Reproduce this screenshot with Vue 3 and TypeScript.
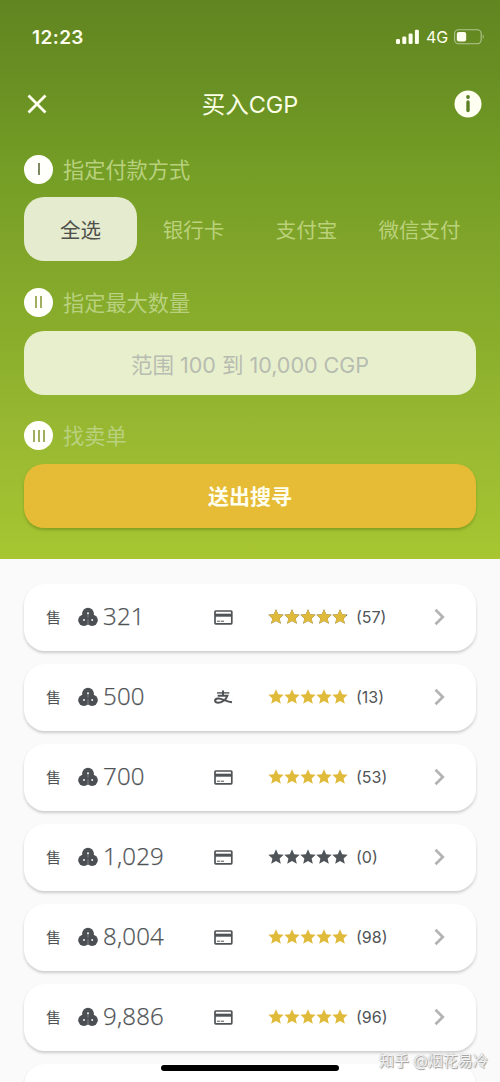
<script setup lang="ts">
interface Order {
  amount: string
  method: 'card' | 'alipay'
  rating: number
  reviews: number
}

const methods: string[] = ['全选', '银行卡', '支付宝', '微信支付']

const orders: Order[] = [
  { amount: '321', method: 'card', rating: 4.86, reviews: 57 },
  { amount: '500', method: 'alipay', rating: 5, reviews: 13 },
  { amount: '700', method: 'card', rating: 5, reviews: 53 },
  { amount: '1,029', method: 'card', rating: 0, reviews: 0 },
  { amount: '8,004', method: 'card', rating: 5, reviews: 98 },
  { amount: '9,886', method: 'card', rating: 5, reviews: 96 },
]

const star = 'M8 0.2 L10.2 5.2 L15.7 5.7 L11.6 9.4 L12.8 14.8 L8 12 L3.2 14.8 L4.4 9.4 L0.3 5.7 L5.8 5.2 Z'
</script>

<template>
  <div class="screen">
    <header class="hero">
      <div class="status">
        <span class="clock">12:23</span>
        <div class="status-right">
          <svg class="signal" width="24" height="16" viewBox="0 0 24 16">
            <rect x="0" y="10" width="4" height="5" rx="1.2" />
            <rect x="6.3" y="7.5" width="4" height="7.5" rx="1.2" />
            <rect x="12.6" y="4.5" width="4" height="10.5" rx="1.2" />
            <rect x="18.9" y="0.8" width="4" height="14.2" rx="1.2" />
          </svg>
          <span class="network">4G</span>
          <svg class="battery" width="31" height="16" viewBox="0 0 31 16">
            <rect x="0.6" y="0.8" width="26.6" height="14" rx="4" fill="none" stroke="#fff" stroke-opacity="0.5" stroke-width="1.1" />
            <rect x="2.8" y="3" width="9.4" height="9.6" rx="2" fill="#fffff0" />
            <path d="M28.8 5.6 Q30.8 7.8 28.8 10 Z" fill="#fff" fill-opacity="0.5" />
          </svg>
        </div>
      </div>

      <nav class="nav">
        <svg width="20" height="20" viewBox="0 0 20 20">
          <path d="M1.5 1.5 L18.5 18.5 M18.5 1.5 L1.5 18.5" stroke="#fffff0" stroke-width="2.8" />
        </svg>
        <h1>买入CGP</h1>
        <svg width="28" height="28" viewBox="0 0 28 28">
          <circle cx="14" cy="14" r="13.5" fill="#fffff2" />
          <circle cx="14" cy="7" r="1.9" fill="#5c8024" />
          <path d="M14 12 V20.5" stroke="#5c8024" stroke-width="3.4" stroke-linecap="round" />
        </svg>
      </nav>

      <div class="step">
        <span class="badge"><i class="first"></i></span>
        <span class="step-label">指定付款方式</span>
      </div>
      <div class="tabs">
        <span v-for="(m, i) in methods" :key="m" class="tab" :class="{ active: i === 0 }">{{ m }}</span>
      </div>

      <div class="step">
        <span class="badge"><i v-for="n in 2" :key="n"></i></span>
        <span class="step-label">指定最大数量</span>
      </div>
      <div class="field">范围 100 到 10,000 CGP</div>

      <div class="step">
        <span class="badge"><i v-for="n in 3" :key="n"></i></span>
        <span class="step-label">找卖单</span>
      </div>
      <div class="submit">送出搜寻</div>
    </header>

    <main class="list">
      <article v-for="o in orders" :key="o.amount" class="card">
        <span class="side">售</span>
        <svg class="coin" width="21" height="20" viewBox="0 0 21 20">
          <g fill="#4b4e52">
            <circle cx="10" cy="6.6" r="5.9" />
            <circle cx="5.9" cy="13.2" r="5.7" />
            <circle cx="14.1" cy="13.2" r="5.7" />
            <rect x="6" y="8" width="8" height="9" />
          </g>
          <path d="M10 6.5 V10.5 M10 12.5 V18" stroke="#9a9ea2" stroke-width="0.7" fill="none" />
          <g fill="#f2f2f2">
            <circle cx="10" cy="6.2" r="1" />
            <circle cx="6" cy="13" r="1" />
            <circle cx="14.2" cy="13" r="1" />
          </g>
        </svg>
        <span class="amount">{{ o.amount }}</span>
        <svg v-if="o.method === 'card'" class="method" width="19" height="15" viewBox="0 0 19 15">
          <rect x="1" y="1" width="16.8" height="12.8" rx="0.7" fill="none" stroke="#505356" stroke-width="1.7" />
          <path d="M1 5.2 H18" stroke="#505356" stroke-width="3" />
          <path d="M3 11.2 H6 M6.7 11.2 H10" stroke="#505356" stroke-width="1" />
        </svg>
        <svg v-else class="method" width="19" height="15" viewBox="0 0 19 15" fill="none" stroke="#505356">
          <path d="M3 2.9 H15.3" stroke-width="1.4" />
          <path d="M9 0.6 V5.6" stroke-width="2" />
          <path d="M3.7 5.8 H13.4 C12.3 9.1 8.4 12.7 4.3 12.7 C0.3 12.7 0 9.1 3.8 8.6 C7.5 8.1 11.5 11.2 18 12.3" stroke-width="2" />
        </svg>
        <div class="stars">
          <svg width="80" height="16" viewBox="0 0 80 16" :fill="o.rating < 5 ? '#4f5458' : 'none'">
            <path v-for="n in 5" :key="n" :d="star" :transform="`translate(${(n - 1) * 16} 0)`" />
          </svg>
          <div class="gold" :style="{ width: o.rating * 16 + 'px' }">
            <svg width="80" height="16" viewBox="0 0 80 16" fill="#e0bb3b">
              <path v-for="n in 5" :key="n" :d="star" :transform="`translate(${(n - 1) * 16} 0)`" />
            </svg>
          </div>
        </div>
        <span class="reviews">({{ o.reviews }})</span>
        <svg class="chevron" width="11" height="18" viewBox="0 0 11 18">
          <path d="M1.5 1.7 L8.8 9 L1.5 16.3" fill="none" stroke="#b3b3b3" stroke-width="2.7" />
        </svg>
      </article>
      <article class="card"></article>
    </main>

    <div class="home-bar"></div>
    <div class="watermark">知乎 @烟花易冷</div>
  </div>
</template>

<style>
body {
  margin: 0;
}
</style>

<style scoped>
.screen {
  position: relative;
  width: 500px;
  height: 1082px;
  overflow: hidden;
  background: #fafafa;
  font-family: Inter, "Noto Sans CJK SC", sans-serif;
  color: #505356;
}
.screen * {
  box-sizing: border-box;
}
svg {
  display: block;
  flex: none;
}
.hero {
  height: 559px;
  padding: 0 24px;
  background: linear-gradient(#618521 0, #6a9123 90px, #739d25 165px, #82a62a 260px, #8aae2b 340px, #98b832 430px, #a7c631 559px);
}
.status {
  display: flex;
  justify-content: space-between;
  align-items: center;
  height: 72px;
  margin-right: -9px;
  padding: 2px 0 0 8px;
  color: #fffff0;
}
.clock {
  font-size: 19px;
  font-weight: 600;
  letter-spacing: 0.4px;
}
.status-right {
  display: flex;
  align-items: center;
}
.signal {
  fill: #fffff0;
}
.network {
  width: 27px;
  margin-left: 6px;
  margin-right: 1px;
  font-size: 16px;
  font-weight: 400;
}
.nav {
  display: flex;
  align-items: center;
  justify-content: space-between;
  height: 64px;
  margin: 0 -6px 0 3px;
}
h1 {
  margin: 0;
  padding: 0 1px 3px 0;
  font-size: 23.5px;
  font-weight: 400;
  color: #fbffe6;
}
.step {
  display: flex;
  align-items: center;
  gap: 10px;
  height: 30px;
  margin-top: 18px;
  font-size: 21.2px;
  line-height: 30px;
  color: #b9d17e;
}
.step-label {
  padding-top: 1px;
}
.badge {
  display: flex;
  align-items: center;
  justify-content: center;
  gap: 3px;
  width: 29px;
  height: 29px;
  border-radius: 50%;
  background: #fffffb;
}
.badge i {
  width: 2px;
  height: 12px;
  background: #a3af60;
}
.badge .first {
  background: #7f8961;
}
.tabs {
  display: grid;
  grid-template-columns: repeat(4, 113px);
  height: 64px;
  margin: 13px 0 26px;
}
.tab {
  display: flex;
  align-items: center;
  justify-content: center;
  border-radius: 20px;
  font-size: 20.5px;
  color: #bbd17b;
}
.tab.active {
  background: #e4ebcf;
  color: #4e514b;
}
.field,
.submit {
  display: flex;
  align-items: center;
  justify-content: center;
  height: 64px;
  border-radius: 20px;
}
.field {
  margin: 13.5px 0 26px;
  padding-top: 1px;
  background: #e8efcd;
  color: #b7bcb0;
  font-size: 21.5px;
}
.submit {
  margin-top: 13px;
  padding-bottom: 1px;
  background: #e6bb36;
  box-shadow: 0 2px 3px rgba(80, 110, 10, 0.4);
  color: #fffff0;
  font-size: 21px;
  font-weight: 700;
}
.list {
  display: flex;
  flex-direction: column;
  gap: 13px;
  padding: 25px 24px 0;
}
.card {
  display: flex;
  align-items: center;
  flex: none;
  height: 67px;
  padding: 0 31px 2px 22px;
  border-radius: 21px;
  background: #fff;
  box-shadow: 0 2px 3px rgba(0, 0, 0, 0.18);
}
.side {
  width: 32px;
  font-size: 15px;
}
.amount {
  width: 115px;
  padding: 0 0 3px 4px;
  font-family: "Open Sans", "Noto Sans", sans-serif;
  font-size: 24px;
  font-weight: 300;
  letter-spacing: 0.2px;
  -webkit-text-stroke: 0.25px #505356;
}
.method {
  margin: 1px 35px 0 0;
}
.stars {
  position: relative;
  width: 80px;
  height: 16px;
}
.gold {
  position: absolute;
  top: 0;
  left: 0;
  overflow: hidden;
}
.reviews {
  padding-left: 8px;
  font-size: 16px;
}
.chevron {
  margin-left: auto;
}
.home-bar {
  position: absolute;
  left: 161px;
  top: 1065px;
  width: 178px;
  height: 6px;
  border-radius: 3px;
  background: #000;
}
.watermark {
  position: absolute;
  left: 379px;
  top: 1049px;
  font-size: 15px;
  line-height: 23px;
  white-space: nowrap;
  color: #f4f4f4;
  text-shadow: 0 0 1px #999, 1px 1px 1px #999;
}
</style>
